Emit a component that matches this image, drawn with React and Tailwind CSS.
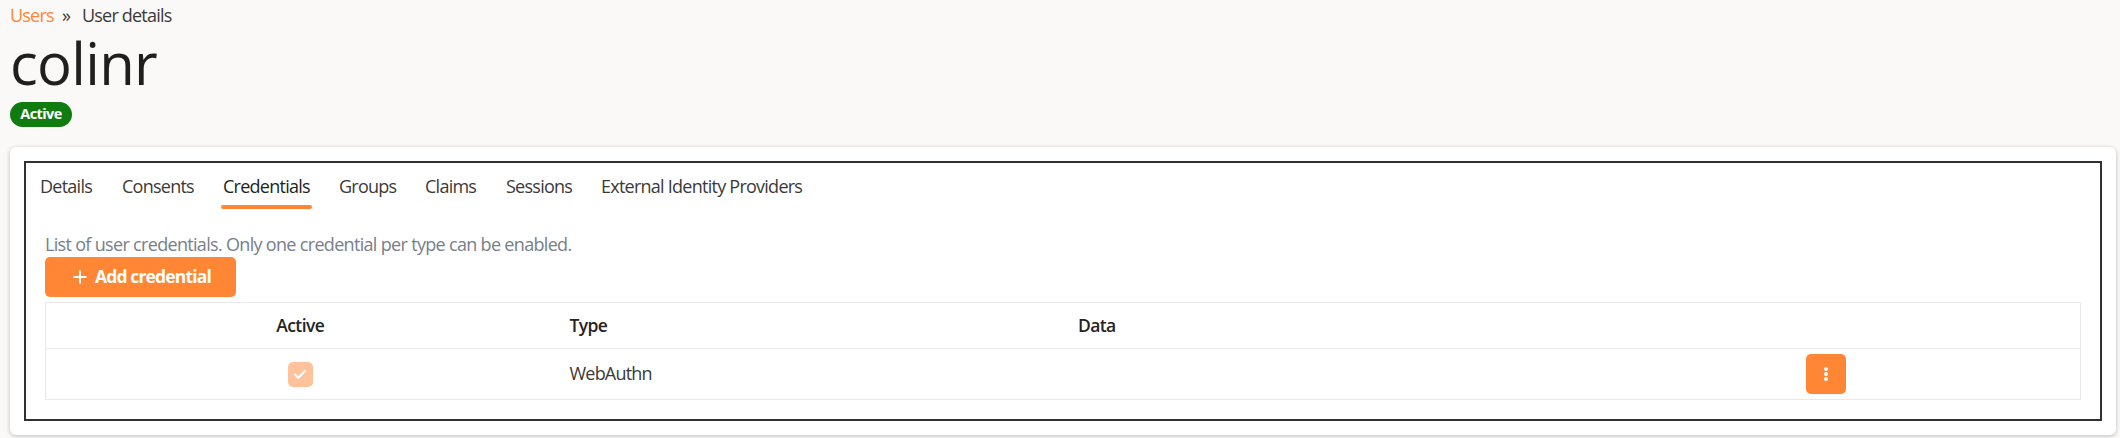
import React from "react";

const tabs = [
  { label: "Details", cls: "w-[82px]" },
  { label: "Consents", cls: "w-[101px]" },
  { label: "Credentials", cls: "w-[116px]", active: true },
  { label: "Groups", cls: "w-[86px]" },
  { label: "Claims", cls: "w-[81px]" },
  { label: "Sessions", cls: "w-[95px]" },
  { label: "External Identity Providers", cls: "w-[220px]" },
];

function Tab({ label, cls, active }) {
  return (
    <div className={`relative h-[46px] shrink-0 pt-[11px] tracking-[-0.75px] ${cls} ${active ? "text-[#201f1e]" : ""}`}>
      {label}
      {active && <span className="absolute -left-[2px] bottom-0 h-1 w-[91px] rounded-full bg-[#ff8635]" />}
    </div>
  );
}

export default function App() {
  return (
    <div className="h-[438px] w-[2120px] overflow-hidden bg-[#faf9f8] pl-[10px] pr-1 font-['Open_Sans','Noto_Sans',sans-serif] text-[18px] leading-6 tracking-[-0.68px] whitespace-nowrap text-[#3b3a39]">
      <nav className="flex h-7 pt-[3px] tracking-[-0.8px]">
        <a className="w-[52px] text-[#ff8635]">Users</a>
        <span className="w-[20px]">»</span>
        <span>User details</span>
      </nav>
      <h1 className="h-[74px] text-[58px] leading-[70px] tracking-[-0.7px] text-[#201f1e]">colinr</h1>
      <span className="flex h-[25px] w-[62px] items-center justify-center rounded-full bg-[#107c10] text-[14.5px] font-bold tracking-[-0.6px] text-white">
        <span className="-mt-0.5">Active</span>
      </span>
      <main className="mt-5 h-[288px] rounded-md bg-white p-[14px] shadow-[0_1px_4px_rgba(0,0,0,0.25)]">
        <section className="h-[260px] border-2 border-[#323130] pr-[19px] pl-[14px]">
          <div className="flex">
            {tabs.map((t) => (
              <Tab key={t.label} {...t} />
            ))}
          </div>
          <div className="pt-[23px] pl-[5px]">
            <p className="mb-px text-[#77808a]">List of user credentials. Only one credential per type can be enabled.</p>
            <button className="flex h-10 w-[191px] items-center rounded-[5px] bg-[#ff8635] pl-7 text-[17.5px] font-bold tracking-[-0.85px] text-white">
              <svg className="mr-2 size-[14px]" viewBox="0 0 14 14" fill="none" stroke="currentColor" strokeWidth="2">
                <path d="M7 .5v13M.5 7h13" />
              </svg>
              <span className="pb-0.5">Add credential</span>
            </button>
            <div className="mt-[5px] h-[98px] border border-[#e9e9e9]">
              <div className="grid h-[46px] grid-cols-4 items-center border-b border-[#e9e9e9] pb-0.5 text-[17.5px] font-semibold tracking-[-0.6px] text-[#252423]">
                <span className="text-center">Active</span>
                <span className="pl-[15px]">Type</span>
                <span className="pl-[15px]">Data</span>
                <span />
              </div>
              <div className="grid h-[50px] grid-cols-4 items-center">
                <span className="mx-auto flex size-[25px] items-center justify-center rounded-[5px] bg-[#ffc29a] text-white">
                  <svg className="size-[14px]" viewBox="0 0 14 14" fill="none" stroke="currentColor" strokeWidth="2">
                    <path d="M1.5 7l3.8 3.8L12.5 3.5" />
                  </svg>
                </span>
                <span className="pb-0.5 pl-[15px] tracking-[-0.8px]">WebAuthn</span>
                <span />
                <button className="mx-auto flex size-10 items-center justify-center rounded-[5px] bg-[#ff8635] text-white">
                  <svg className="h-[14px] w-1" viewBox="0 0 4 14" fill="currentColor">
                    <circle cx="2" cy="2" r="2" />
                    <circle cx="2" cy="7" r="2" />
                    <circle cx="2" cy="12" r="2" />
                  </svg>
                </button>
              </div>
            </div>
          </div>
        </section>
      </main>
    </div>
  );
}
